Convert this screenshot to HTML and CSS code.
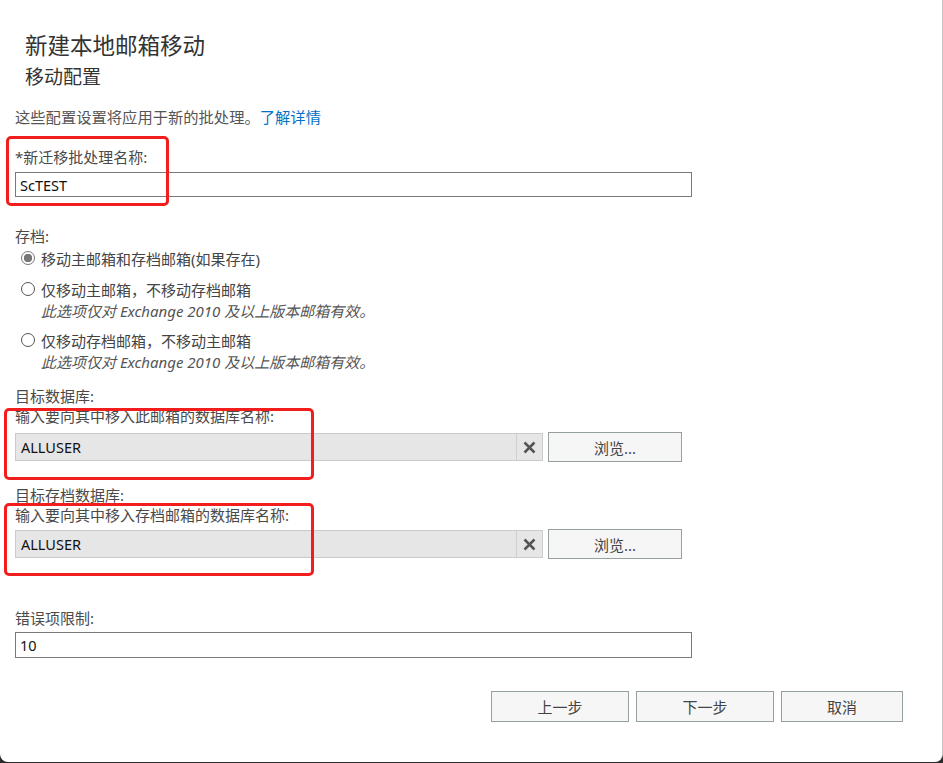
FILE: index.html
```html
<html>
    <head>
        <meta charset="utf-8">
        <link rel="stylesheet" href="styles.css">
    </head>
    <body>
        <div class="dialog">
            <span class="frame_top"></span>
            <span class="frame_mark"></span>

            <div class="title">新建本地邮箱移动</div>
            <div class="subtitle">移动配置</div>

            <div class="form">
                <div class="desc">这些配置设置将应用于新的批处理。<a href="#" class="link">了解详情</a></div>

                <div class="label label_first">*新迁移批处理名称:</div>
                <input class="textbox" type="text" value="ScTEST" />

                <div class="label label_archive">存档:</div>
                <div class="radio_row radio_first">
                    <span class="radio checked"></span>
                    <span>移动主邮箱和存档邮箱(如果存在)</span>
                </div>
                <div class="radio_row radio_second">
                    <span class="radio"></span>
                    <span>仅移动主邮箱，不移动存档邮箱</span>
                </div>
                <div class="note">此选项仅对 Exchange 2010 及以上版本邮箱有效。</div>
                <div class="radio_row radio_third">
                    <span class="radio"></span>
                    <span>仅移动存档邮箱，不移动主邮箱</span>
                </div>
                <div class="note">此选项仅对 Exchange 2010 及以上版本邮箱有效。</div>

                <div class="label label_db">目标数据库:</div>
                <div class="label">输入要向其中移入此邮箱的数据库名称:</div>
                <div class="picker picker_first">
                    <div class="picker_box">
                        <span class="picker_value">ALLUSER</span>
                        <span class="clear">
                            <svg width="13" height="13" viewBox="0 0 13 13">
                                <path d="M1.5 1.5 L11.5 11.5 M11.5 1.5 L1.5 11.5" stroke="#555" stroke-width="2.5" fill="none" />
                            </svg>
                        </span>
                    </div>
                    <button class="button browse">浏览...</button>
                </div>

                <div class="label label_archive_db">目标存档数据库:</div>
                <div class="label">输入要向其中移入存档邮箱的数据库名称:</div>
                <div class="picker">
                    <div class="picker_box">
                        <span class="picker_value">ALLUSER</span>
                        <span class="clear">
                            <svg width="13" height="13" viewBox="0 0 13 13">
                                <path d="M1.5 1.5 L11.5 11.5 M11.5 1.5 L1.5 11.5" stroke="#555" stroke-width="2.5" fill="none" />
                            </svg>
                        </span>
                    </div>
                    <button class="button browse">浏览...</button>
                </div>

                <div class="label label_errors">错误项限制:</div>
                <input class="textbox textbox_small" type="text" value="10" />
            </div>

            <div class="footer">
                <button class="button step">上一步</button>
                <button class="button step">下一步</button>
                <button class="button cancel">取消</button>
            </div>

            <!-- red markers drawn over the required fields -->
            <span class="marker marker_name"></span>
            <span class="marker marker_db"></span>
            <span class="marker marker_archive"></span>
        </div>
    </body>
</html>
```

FILE: styles.css
```css
body
{
    margin:0;
    background:#2b2b2b;
    font-family:"Noto Sans","Noto Sans CJK SC",sans-serif;
    color:#444;
}
.dialog
{
    position:relative;
    box-sizing:border-box;
    width:943px;
    height:762px;
    background:#fff;
    border-right:1px solid #c6c6c6;
    border-radius:0 0 8px 8px;
    overflow:hidden;
}
span.frame_top
{
    position:absolute;
    right:-1px;
    top:0;
    width:1px;
    height:33px;
    background:#3e3e3e;
}
span.frame_mark
{
    position:absolute;
    right:-1px;
    top:33px;
    width:1px;
    height:35px;
    background:#c67c7c;
}
div.title
{
    padding:31px 0 0 25px;
    font-size:22.5px;
    line-height:30px;
    color:#333;
}
div.subtitle
{
    margin-top:4px;
    padding-left:25px;
    font-size:19px;
    line-height:24px;
    color:#333;
}
div.form
{
    padding-left:15px;
    font-size:15px;
}
div.desc
{
    margin-top:18px;
    line-height:20px;
    font-size:15.3px;
    color:#555;
}
a.link
{
    color:#0072c6;
    text-decoration:none;
}
div.label
{
    line-height:20px;
    color:#4a4a4a;
}
div.label_first { margin-top:20px; }
div.label_archive { margin-top:29px; }
div.label_db { margin-top:14px; }
div.label_archive_db { margin-top:23px; }
div.label_errors { margin-top:49px; }
input.textbox
{
    display:block;
    box-sizing:border-box;
    width:677px;
    height:25px;
    margin-top:5px;
    padding:0 4px;
    border:1px solid #7a7a7a;
    border-radius:0;
    font-family:"Noto Sans","Noto Sans CJK SC",sans-serif;
    font-size:14.5px;
    color:#111;
    outline:none;
}
input.textbox_small
{
    height:26px;
    margin-top:4px;
}
div.radio_row
{
    display:flex;
    align-items:center;
    gap:6px;
    height:20px;
    padding-left:6px;
    color:#444;
}
div.radio_first { margin-top:2px; }
div.radio_second { margin-top:11px; }
div.radio_third { margin-top:9px; }
span.radio
{
    box-sizing:border-box;
    width:14px;
    height:14px;
    border:1px solid #555;
    border-radius:50%;
    background:#fff;
}
span.checked
{
    border-color:#777;
    background:radial-gradient(circle, #777 0, #777 4px, #fff 4.5px);
}
div.note
{
    margin-top:2px;
    padding-left:26px;
    line-height:20px;
    font-style:italic;
    font-size:15px;
    color:#555;
}
div.picker
{
    display:flex;
    align-items:center;
    gap:5px;
    height:30px;
    margin-top:4px;
}
div.picker_first { margin-top:6px; }
div.picker_box
{
    display:flex;
    box-sizing:border-box;
    width:528px;
    height:28px;
    background:#e6e6e6;
    border:1px solid #cbcbcb;
}
span.picker_value
{
    flex:1;
    padding-left:5px;
    line-height:26px;
    font-size:14.5px;
    color:#111;
}
span.clear
{
    display:flex;
    align-items:center;
    justify-content:center;
    width:25px;
    border-left:1px solid #cfcfcf;
}
button.button
{
    box-sizing:border-box;
    background:#f6f6f6;
    border:1px solid #97a0a0;
    border-radius:0;
    font-family:"Noto Sans","Noto Sans CJK SC",sans-serif;
    font-size:15px;
    color:#444;
    padding:0;
}
button.browse
{
    width:134px;
    height:30px;
}
div.footer
{
    display:flex;
    justify-content:flex-end;
    gap:7px;
    margin-top:33px;
    padding-right:39px;
}
button.step
{
    width:138px;
    height:31px;
}
button.cancel
{
    width:122px;
    height:31px;
}
span.marker
{
    position:absolute;
    box-sizing:border-box;
    border:3px solid #f21d1d;
    border-radius:5px;
}
span.marker_name
{
    left:6px;
    top:136px;
    width:163px;
    height:70px;
}
span.marker_db
{
    left:4px;
    top:408px;
    width:310px;
    height:72px;
}
span.marker_archive
{
    left:4px;
    top:503px;
    width:310px;
    height:73px;
}
```
